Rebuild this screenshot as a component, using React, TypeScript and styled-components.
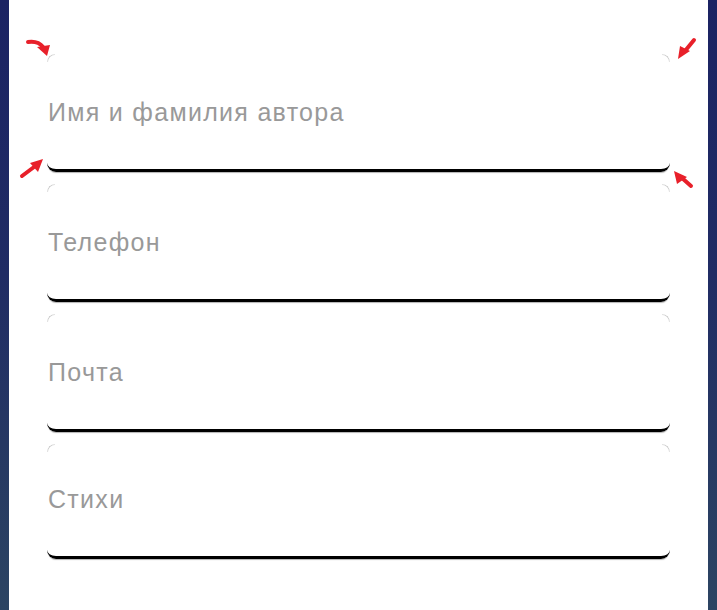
import React from "react";
import styled, { createGlobalStyle } from "styled-components";

const GlobalStyle = createGlobalStyle`
  html, body {
    margin: 0;
    padding: 0;
  }
  body {
    font-family: "Liberation Sans", "Helvetica Neue", Arial, sans-serif;
  }
`;

const fields = ["Имя и фамилия автора", "Телефон", "Почта", "Стихи"];

const App: React.FC = () => {
  return (
    <Page>
      <GlobalStyle />
      <Panel>
        {fields.map((label, i) => (
          <Field key={label} $compact={i === fields.length - 1}>
            <Label>{label}</Label>
          </Field>
        ))}
      </Panel>
      <Arrows width="717" height="610" viewBox="0 0 717 610">
        <g stroke="#e8202a" strokeWidth="4" fill="none" strokeLinecap="round">
          <path d="M28 42 C35 41 40 43 43 47" />
          <path d="M694 40 L685 51" />
          <path d="M22 176 L34 167" />
          <path d="M691 186 L682 178" />
        </g>
        <g fill="#e8202a">
          <polygon points="37,47 50,45 47,56" />
          <polygon points="690,51 678,59 680,46" />
          <polygon points="30,163 43,159 38,172" />
          <polygon points="687,177 674,171 677,184" />
        </g>
      </Arrows>
    </Page>
  );
};

const Page = styled.div`
  position: relative;
  min-height: 610px;
  padding: 0 9px;
  box-sizing: border-box;
  background: linear-gradient(180deg, #1b2363 0%, #202c64 45%, #2c4462 100%);
`;

const Panel = styled.div`
  min-height: 610px;
  background: #ffffff;
  padding: 54px 38px 0;
  box-sizing: border-box;
  display: flex;
  flex-direction: column;
  gap: 12px;
`;

const Field = styled.div<{ $compact?: boolean }>`
  position: relative;
  padding: ${(p) => (p.$compact ? "41px 0 43px" : "44px 0 43px")};
  border-bottom: 3px solid #000;
  border-radius: 0 0 9px 9px;
  box-shadow: 0 2px 1px -1px rgba(0, 0, 0, 0.3);

  &::before,
  &::after {
    content: "";
    position: absolute;
    top: 0;
    width: 8px;
    height: 8px;
    border-top: 1px solid #c4c4c4;
    box-sizing: border-box;
  }
  &::before {
    left: 0;
    border-left: 1px solid #c4c4c4;
    border-top-left-radius: 8px;
    -webkit-mask-image: linear-gradient(135deg, #000 30%, transparent 75%);
  }
  &::after {
    right: 0;
    border-right: 1px solid #c4c4c4;
    border-top-right-radius: 8px;
    -webkit-mask-image: linear-gradient(225deg, #000 30%, transparent 75%);
  }
`;

const Label = styled.div`
  padding-left: 1px;
  font-size: 25px;
  line-height: 28px;
  letter-spacing: 1.3px;
  color: #999999;
`;

const Arrows = styled.svg`
  position: absolute;
  top: 0;
  left: 0;
  pointer-events: none;
`;

export default App;
